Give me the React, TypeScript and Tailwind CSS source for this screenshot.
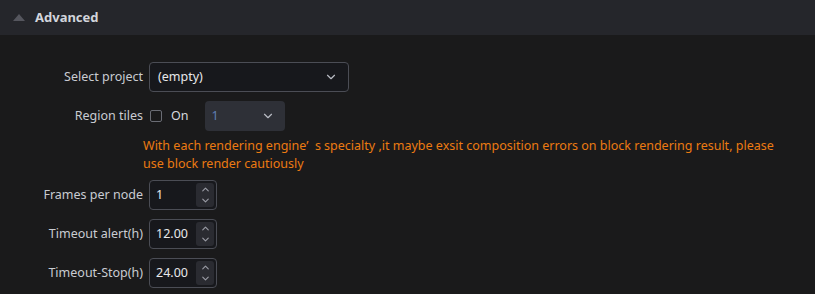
import { ChevronDown, ChevronUp } from "lucide-react";

const FONT = { fontFamily: '"Noto Sans", "Liberation Sans", sans-serif' };

function Label({ children }: { children: React.ReactNode }) {
  return (
    <div className="w-[149px] shrink-0 pr-[6px] text-right text-[12.5px] text-[#c9ccd2]">
      {children}
    </div>
  );
}

function NumberField({ value }: { value: string }) {
  return (
    <div className="flex h-[30px] w-[68px] items-center rounded-[4px] border border-[#4b4d55] bg-[#17181c] pl-[6px] pr-[2px]">
      <span className="flex-1 text-[12.5px] text-[#e8e8ea]">{value}</span>
      <div className="flex h-[24px] w-[18px] flex-col items-center justify-center rounded-[3px] bg-[#2a2b31] text-[#9a9ca5]">
        <ChevronUp className="size-[11px]" strokeWidth={2.5} />
        <ChevronDown className="size-[11px]" strokeWidth={2.5} />
      </div>
    </div>
  );
}

export default function App() {
  return (
    <div className="h-[294px] w-[815px] overflow-hidden bg-[#1a1a1b]" style={FONT}>
      <div className="flex h-[35px] items-center gap-[10px] bg-[#25262b] pl-[13px]">
        <svg width="12" height="7" viewBox="0 0 12 7" className="mb-[1px]">
          <path d="M6 0 L12 7 L0 7 Z" fill="#55565e" />
        </svg>
        <span className="text-[13px] font-bold text-[#d2d5dc]">Advanced</span>
      </div>

      <div className="flex flex-col pt-[27px]">
        <div className="flex items-center">
          <Label>Select project</Label>
          <div className="flex h-[30px] w-[200px] items-center justify-between rounded-[4px] border border-[#4b4d55] bg-[#17181c] pl-[8px] pr-[10px]">
            <span className="text-[12.5px] text-[#e8e8ea]">(empty)</span>
            <ChevronDown className="size-[14px] text-[#b9bcc4]" strokeWidth={2} />
          </div>
        </div>

        <div className="mt-[9px] flex items-center">
          <Label>Region tiles</Label>
          <div className="ml-[1px] size-[12px] rounded-[2px] border border-[#6a6c74]" />
          <span className="ml-[9px] text-[12.5px] text-[#d6d8dd]">On</span>
          <div className="ml-[16px] flex h-[30px] w-[80px] items-center justify-between rounded-[4px] bg-[#2e3037] pl-[7px] pr-[10px]">
            <span className="text-[12.5px] text-[#5f7fb3]">1</span>
            <ChevronDown className="size-[14px] text-[#b9bcc4]" strokeWidth={2} />
          </div>
        </div>

        <p className="mt-[6px] ml-[143px] w-[650px] text-[12.5px] leading-[18px] text-[#ec7a12]">
          With each rendering engine’&nbsp;&nbsp;s specialty ,it maybe exsit composition errors on block
          rendering result, please use block render cautiously
        </p>

        <div className="mt-[7px] flex items-center">
          <Label>Frames per node</Label>
          <NumberField value="1" />
        </div>
        <div className="mt-[9px] flex items-center">
          <Label>Timeout alert(h)</Label>
          <NumberField value="12.00" />
        </div>
        <div className="mt-[9px] flex items-center">
          <Label>Timeout-Stop(h)</Label>
          <NumberField value="24.00" />
        </div>
      </div>
    </div>
  );
}
